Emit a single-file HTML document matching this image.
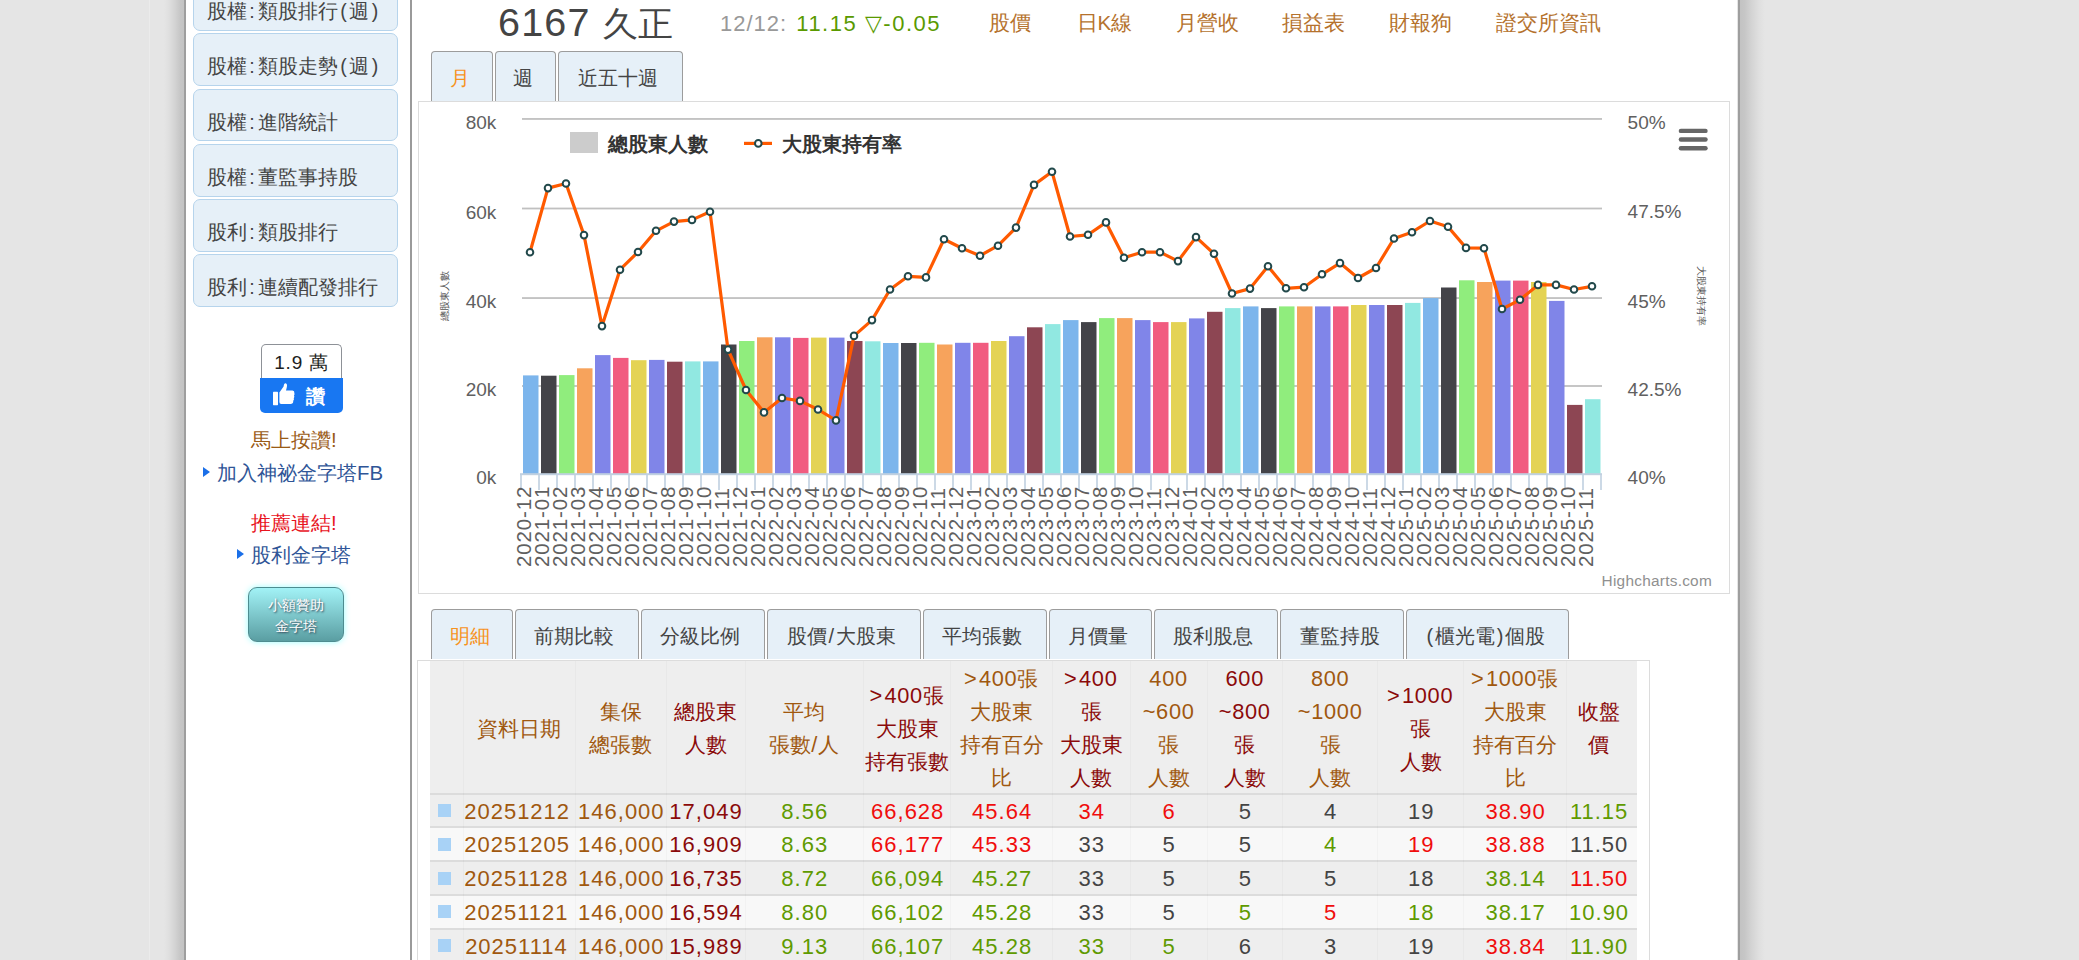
<!DOCTYPE html>
<html><head><meta charset="utf-8">
<style>
*{box-sizing:border-box;margin:0;padding:0}
html,body{width:2079px;height:960px;overflow:hidden}
body{position:relative;background:#e5e5e5;font-family:"Liberation Sans",sans-serif;color:#444}
.abs{position:absolute}
#vl{position:absolute;left:149px;top:0;width:1px;height:960px;background:#ebebeb}
#wrap{position:absolute;left:185.8px;top:0;width:1551.7px;height:960px;background:#fff}
#shl{position:absolute;left:164px;top:0;width:20px;height:960px;background:linear-gradient(to left,#c3c3c3 0%,#c6c6c6 18%,#d3d3d3 45%,#dfdfdf 75%,#e5e5e5 100%)}
#lnl{position:absolute;left:183.9px;top:0;width:1.9px;height:960px;background:#9e9e9e}
#shr{position:absolute;left:1739.7px;top:0;width:25px;height:960px;background:linear-gradient(to right,#c3c3c3 0%,#c6c6c6 18%,#d3d3d3 45%,#dfdfdf 75%,#e5e5e5 100%)}
#lnr{position:absolute;left:1737.8px;top:0;width:1.9px;height:960px;background:#9e9e9e}
.sb{position:absolute;left:193px;width:205px;height:52.9px;background:#e6f0f8;border:1.4px solid #b6d4ec;border-radius:7px;font-size:19.6px;color:#444;padding-left:12.5px;line-height:20px;padding-top:22px;white-space:nowrap}
.col{margin:0 2.8px}
.tpar{margin:0 1.8px}
.par{margin:0 2.6px}
#sline{position:absolute;left:410px;top:0;width:2px;height:960px;background:#9a9a9a}
#fb{position:absolute;left:260.6px;top:343.8px;width:82px;height:69px}
#fbt{position:absolute;left:0.5px;top:0;width:81px;height:35px;background:#fff;border:1.5px solid #8d9197;border-bottom:none;border-radius:5px 5px 0 0;font-size:19px;color:#1c1e21;text-align:center;line-height:36px;letter-spacing:0.8px}
#fbb{position:absolute;left:-0.4px;top:34.1px;width:83px;height:35px;background:#1877f2;color:#fff;font-size:19px;font-weight:bold;line-height:38px;padding-left:45.5px;border-radius:0 0 5px 5px}
.st{position:absolute;font-size:20.4px;white-space:nowrap;line-height:24px}
.tri{position:absolute;width:0;height:0;border-top:5px solid transparent;border-bottom:5px solid transparent;border-left:7px solid #1a6fe8}
#don{position:absolute;left:247.5px;top:587px;width:96px;height:55px;border-radius:9px;border:1.5px solid #4e8c90;background:linear-gradient(#a2f2f6,#5a9ea2);box-shadow:0 0 6px #9ff;color:#fff;font-size:14px;text-align:center;line-height:20.5px;padding-top:7px;text-shadow:1px 1px 2px #345}
#title{position:absolute;left:498px;top:-2px;font-size:39.5px;color:#444;white-space:nowrap;line-height:48px}
#dt{position:absolute;left:720px;top:10.5px;font-size:22px;color:#999;white-space:nowrap;line-height:26px;letter-spacing:1px}
#dt span{color:#5a9a00;letter-spacing:1.5px;margin-left:2px}
.lk{position:absolute;top:10px;font-size:20.5px;color:#b5722d;white-space:nowrap;line-height:26px}
.tab{position:absolute;background:#e6f0f8;border:1.5px solid #9c9c9c;border-bottom:none;border-radius:4px 4px 0 0;font-size:20px;color:#444;text-align:center;line-height:20px;padding-top:16px;padding-right:5px;white-space:nowrap}
.tab.act{color:#f7931e}
#chart{position:absolute;left:417.5px;top:101px;width:1312px;height:493px;border:1px solid #dcdcdc;background:#fff}
#tbl{position:absolute;left:417px;top:659.6px;width:1232.6px;height:400px;border:1px solid #dcdcdc;background:#fff}
.xl{font-family:"Liberation Sans",sans-serif;font-size:20.5px;fill:#606060;letter-spacing:0.85px}
.yl{font-family:"Liberation Sans",sans-serif;font-size:19px;fill:#606060}
.at{font-family:"Liberation Sans",sans-serif;font-size:10px;fill:#555}
.lg{font-family:"Liberation Sans",sans-serif;font-size:20px;font-weight:bold;fill:#333}
.hc{font-family:"Liberation Sans",sans-serif;font-size:15.4px;letter-spacing:0.25px;fill:#909090}
.thbg{position:absolute;background:#eeeeee}
.csep{position:absolute;width:1px;background:rgba(0,0,0,0.025)}
.th{position:absolute;display:flex;align-items:center;justify-content:center;text-align:center;font-size:20.5px;line-height:33px;white-space:nowrap;padding-top:2.5px}
.hn{font-size:21.8px;letter-spacing:0.7px}
.gt{margin-right:1.5px;margin-left:-1px}
.tr{position:absolute;left:430px;width:1206.5px;height:33.8px;border-top:2px solid #dcdcdc}
.ic{position:absolute;left:438.3px;width:13px;height:13px;background:#a8d2f6}
.td{position:absolute;height:33.8px;text-align:center;font-size:22px;line-height:37px;letter-spacing:1px;text-indent:1px;white-space:nowrap}
</style></head>
<body>
<div id="vl"></div>
<div id="wrap"></div><div id="shl"></div><div id="lnl"></div><div id="shr"></div><div id="lnr"></div>
<div class="sb" style="top:-21.8px">股權<span class="col">:</span>類股排行<span class="par">(</span>週<span class="par">)</span></div>
<div class="sb" style="top:33.4px">股權<span class="col">:</span>類股走勢<span class="par">(</span>週<span class="par">)</span></div>
<div class="sb" style="top:88.6px">股權<span class="col">:</span>進階統計</div>
<div class="sb" style="top:143.8px">股權<span class="col">:</span>董監事持股</div>
<div class="sb" style="top:199.0px">股利<span class="col">:</span>類股排行</div>
<div class="sb" style="top:254.2px">股利<span class="col">:</span>連續配發排行</div>
<div id="sline"></div>
<div id="fb"><div id="fbt">1.9 萬</div><div id="fbb">讚</div>
<svg style="position:absolute;left:12.6px;top:39.4px" width="22" height="23" viewBox="0 0 22 23"><rect x="0" y="8.8" width="5" height="13.4" rx="0.6" fill="#fff"/><path d="M6.4 9.5 L10.6 3.6 Q11 0.2 12.6 0.3 Q14.6 0.8 13.8 4.2 L13 7.6 L19.5 7.6 Q21.6 8 21.4 10.2 Q21.8 11.6 21 12.6 Q21.8 14 20.8 15.2 Q21.4 16.8 20.2 17.8 Q20.6 20.8 18 20.9 L8.2 20.9 Q6.4 20.9 6.4 19 Z" fill="#fff"/></svg>
</div>
<div class="st" style="left:251px;top:427.5px;color:#9a5b16">馬上按讚!</div>
<div class="tri" style="left:203px;top:467px"></div>
<div class="st" style="left:217px;top:460.5px;color:#2f5597">加入神祕金字塔FB</div>
<div class="st" style="left:251px;top:510.5px;color:#e8141e">推薦連結!</div>
<div class="tri" style="left:237px;top:549px"></div>
<div class="st" style="left:250.5px;top:543px;color:#2f5597">股利金字塔</div>
<div id="don">小額贊助<br>金字塔</div>
<div id="title"><span style="letter-spacing:1.2px">6167</span> <span style="font-size:35px;margin-left:1.5px">久正</span></div>
<div id="dt">12/12: <span>11.15 ▽-0.05</span></div>
<div class="lk" style="left:988.8px">股價</div>
<div class="lk" style="left:1076.5px">日K線</div>
<div class="lk" style="left:1176.0px">月營收</div>
<div class="lk" style="left:1282.3px">損益表</div>
<div class="lk" style="left:1388.8px">財報狗</div>
<div class="lk" style="left:1495.8px">證交所資訊</div>
<div class="tab act" style="left:431.1px;top:51px;width:61.9px;height:50px">月</div>
<div class="tab" style="left:494.6px;top:51px;width:61.3px;height:50px">週</div>
<div class="tab" style="left:557.8px;top:51px;width:124.8px;height:50px">近五十週</div>
<div id="chart"></div>
<div class="tab act" style="left:431.0px;top:608.8px;width:82.1px;height:50.2px">明細</div>
<div class="tab" style="left:514.7px;top:608.8px;width:124.5px;height:50.2px">前期比較</div>
<div class="tab" style="left:640.9px;top:608.8px;width:124.1px;height:50.2px">分級比例</div>
<div class="tab" style="left:766.7px;top:608.8px;width:154.1px;height:50.2px">股價<span class="tpar">/</span>大股東</div>
<div class="tab" style="left:922.5px;top:608.8px;width:124.4px;height:50.2px">平均張數</div>
<div class="tab" style="left:1048.6px;top:608.8px;width:103.7px;height:50.2px">月價量</div>
<div class="tab" style="left:1154.0px;top:608.8px;width:123.7px;height:50.2px">股利股息</div>
<div class="tab" style="left:1279.7px;top:608.8px;width:124.7px;height:50.2px">董監持股</div>
<div class="tab" style="left:1406.1px;top:608.8px;width:162.8px;height:50.2px"><span class="tpar">(</span>櫃光電<span class="tpar">)</span>個股</div>
<div id="tbl"></div>
<svg width="2079" height="960" style="position:absolute;left:0;top:0">
<rect x="522" y="118.05" width="1080" height="1.8" fill="#c0c0c0"/>
<rect x="522" y="207.60" width="1080" height="1.8" fill="#c0c0c0"/>
<rect x="522" y="297.15" width="1080" height="1.8" fill="#c0c0c0"/>
<rect x="522" y="385.10" width="1080" height="1.8" fill="#c0c0c0"/>
<rect x="523.00" y="375.40" width="15.5" height="98.60" fill="#7cb5ec"/>
<rect x="541.00" y="375.70" width="15.5" height="98.30" fill="#434348"/>
<rect x="559.00" y="375.10" width="15.5" height="98.90" fill="#90ed7d"/>
<rect x="577.00" y="368.30" width="15.5" height="105.70" fill="#f7a35c"/>
<rect x="595.00" y="355.10" width="15.5" height="118.90" fill="#8085e9"/>
<rect x="613.00" y="357.90" width="15.5" height="116.10" fill="#f15c80"/>
<rect x="631.00" y="360.20" width="15.5" height="113.80" fill="#e4d354"/>
<rect x="649.00" y="359.90" width="15.5" height="114.10" fill="#8085e8"/>
<rect x="667.00" y="361.70" width="15.5" height="112.30" fill="#8d4653"/>
<rect x="685.00" y="361.40" width="15.5" height="112.60" fill="#91e8e1"/>
<rect x="703.00" y="361.40" width="15.5" height="112.60" fill="#7cb5ec"/>
<rect x="721.00" y="344.50" width="15.5" height="129.50" fill="#434348"/>
<rect x="739.00" y="341.00" width="15.5" height="133.00" fill="#90ed7d"/>
<rect x="757.00" y="337.30" width="15.5" height="136.70" fill="#f7a35c"/>
<rect x="775.00" y="337.30" width="15.5" height="136.70" fill="#8085e9"/>
<rect x="793.00" y="337.90" width="15.5" height="136.10" fill="#f15c80"/>
<rect x="811.00" y="337.60" width="15.5" height="136.40" fill="#e4d354"/>
<rect x="829.00" y="337.60" width="15.5" height="136.40" fill="#8085e8"/>
<rect x="847.00" y="341.00" width="15.5" height="133.00" fill="#8d4653"/>
<rect x="865.00" y="341.30" width="15.5" height="132.70" fill="#91e8e1"/>
<rect x="883.00" y="343.00" width="15.5" height="131.00" fill="#7cb5ec"/>
<rect x="901.00" y="343.00" width="15.5" height="131.00" fill="#434348"/>
<rect x="919.00" y="342.80" width="15.5" height="131.20" fill="#90ed7d"/>
<rect x="937.00" y="344.50" width="15.5" height="129.50" fill="#f7a35c"/>
<rect x="955.00" y="342.80" width="15.5" height="131.20" fill="#8085e9"/>
<rect x="973.00" y="342.80" width="15.5" height="131.20" fill="#f15c80"/>
<rect x="991.00" y="341.00" width="15.5" height="133.00" fill="#e4d354"/>
<rect x="1009.00" y="336.20" width="15.5" height="137.80" fill="#8085e8"/>
<rect x="1027.00" y="327.30" width="15.5" height="146.70" fill="#8d4653"/>
<rect x="1045.00" y="324.10" width="15.5" height="149.90" fill="#91e8e1"/>
<rect x="1063.00" y="320.10" width="15.5" height="153.90" fill="#7cb5ec"/>
<rect x="1081.00" y="322.10" width="15.5" height="151.90" fill="#434348"/>
<rect x="1099.00" y="318.10" width="15.5" height="155.90" fill="#90ed7d"/>
<rect x="1117.00" y="318.10" width="15.5" height="155.90" fill="#f7a35c"/>
<rect x="1135.00" y="320.10" width="15.5" height="153.90" fill="#8085e9"/>
<rect x="1153.00" y="322.10" width="15.5" height="151.90" fill="#f15c80"/>
<rect x="1171.00" y="322.10" width="15.5" height="151.90" fill="#e4d354"/>
<rect x="1189.00" y="318.40" width="15.5" height="155.60" fill="#8085e8"/>
<rect x="1207.00" y="311.80" width="15.5" height="162.20" fill="#8d4653"/>
<rect x="1225.00" y="308.10" width="15.5" height="165.90" fill="#91e8e1"/>
<rect x="1243.00" y="306.40" width="15.5" height="167.60" fill="#7cb5ec"/>
<rect x="1261.00" y="308.10" width="15.5" height="165.90" fill="#434348"/>
<rect x="1279.00" y="306.40" width="15.5" height="167.60" fill="#90ed7d"/>
<rect x="1297.00" y="306.40" width="15.5" height="167.60" fill="#f7a35c"/>
<rect x="1315.00" y="306.40" width="15.5" height="167.60" fill="#8085e9"/>
<rect x="1333.00" y="306.40" width="15.5" height="167.60" fill="#f15c80"/>
<rect x="1351.00" y="305.00" width="15.5" height="169.00" fill="#e4d354"/>
<rect x="1369.00" y="305.00" width="15.5" height="169.00" fill="#8085e8"/>
<rect x="1387.00" y="305.00" width="15.5" height="169.00" fill="#8d4653"/>
<rect x="1405.00" y="302.90" width="15.5" height="171.10" fill="#91e8e1"/>
<rect x="1423.00" y="298.10" width="15.5" height="175.90" fill="#7cb5ec"/>
<rect x="1441.00" y="287.50" width="15.5" height="186.50" fill="#434348"/>
<rect x="1459.00" y="280.30" width="15.5" height="193.70" fill="#90ed7d"/>
<rect x="1477.00" y="282.00" width="15.5" height="192.00" fill="#f7a35c"/>
<rect x="1495.00" y="280.60" width="15.5" height="193.40" fill="#8085e9"/>
<rect x="1513.00" y="280.60" width="15.5" height="193.40" fill="#f15c80"/>
<rect x="1531.00" y="282.00" width="15.5" height="192.00" fill="#e4d354"/>
<rect x="1549.00" y="300.90" width="15.5" height="173.10" fill="#8085e8"/>
<rect x="1567.00" y="404.90" width="15.5" height="69.10" fill="#8d4653"/>
<rect x="1585.00" y="399.20" width="15.5" height="74.80" fill="#91e8e1"/>
<rect x="520" y="473.2" width="1082" height="2" fill="#c0d0e0"/>
<rect x="520.20" y="474" width="1.6" height="16" fill="#c0d0e0"/>
<rect x="538.20" y="474" width="1.6" height="16" fill="#c0d0e0"/>
<rect x="556.20" y="474" width="1.6" height="16" fill="#c0d0e0"/>
<rect x="574.20" y="474" width="1.6" height="16" fill="#c0d0e0"/>
<rect x="592.20" y="474" width="1.6" height="16" fill="#c0d0e0"/>
<rect x="610.20" y="474" width="1.6" height="16" fill="#c0d0e0"/>
<rect x="628.20" y="474" width="1.6" height="16" fill="#c0d0e0"/>
<rect x="646.20" y="474" width="1.6" height="16" fill="#c0d0e0"/>
<rect x="664.20" y="474" width="1.6" height="16" fill="#c0d0e0"/>
<rect x="682.20" y="474" width="1.6" height="16" fill="#c0d0e0"/>
<rect x="700.20" y="474" width="1.6" height="16" fill="#c0d0e0"/>
<rect x="718.20" y="474" width="1.6" height="16" fill="#c0d0e0"/>
<rect x="736.20" y="474" width="1.6" height="16" fill="#c0d0e0"/>
<rect x="754.20" y="474" width="1.6" height="16" fill="#c0d0e0"/>
<rect x="772.20" y="474" width="1.6" height="16" fill="#c0d0e0"/>
<rect x="790.20" y="474" width="1.6" height="16" fill="#c0d0e0"/>
<rect x="808.20" y="474" width="1.6" height="16" fill="#c0d0e0"/>
<rect x="826.20" y="474" width="1.6" height="16" fill="#c0d0e0"/>
<rect x="844.20" y="474" width="1.6" height="16" fill="#c0d0e0"/>
<rect x="862.20" y="474" width="1.6" height="16" fill="#c0d0e0"/>
<rect x="880.20" y="474" width="1.6" height="16" fill="#c0d0e0"/>
<rect x="898.20" y="474" width="1.6" height="16" fill="#c0d0e0"/>
<rect x="916.20" y="474" width="1.6" height="16" fill="#c0d0e0"/>
<rect x="934.20" y="474" width="1.6" height="16" fill="#c0d0e0"/>
<rect x="952.20" y="474" width="1.6" height="16" fill="#c0d0e0"/>
<rect x="970.20" y="474" width="1.6" height="16" fill="#c0d0e0"/>
<rect x="988.20" y="474" width="1.6" height="16" fill="#c0d0e0"/>
<rect x="1006.20" y="474" width="1.6" height="16" fill="#c0d0e0"/>
<rect x="1024.20" y="474" width="1.6" height="16" fill="#c0d0e0"/>
<rect x="1042.20" y="474" width="1.6" height="16" fill="#c0d0e0"/>
<rect x="1060.20" y="474" width="1.6" height="16" fill="#c0d0e0"/>
<rect x="1078.20" y="474" width="1.6" height="16" fill="#c0d0e0"/>
<rect x="1096.20" y="474" width="1.6" height="16" fill="#c0d0e0"/>
<rect x="1114.20" y="474" width="1.6" height="16" fill="#c0d0e0"/>
<rect x="1132.20" y="474" width="1.6" height="16" fill="#c0d0e0"/>
<rect x="1150.20" y="474" width="1.6" height="16" fill="#c0d0e0"/>
<rect x="1168.20" y="474" width="1.6" height="16" fill="#c0d0e0"/>
<rect x="1186.20" y="474" width="1.6" height="16" fill="#c0d0e0"/>
<rect x="1204.20" y="474" width="1.6" height="16" fill="#c0d0e0"/>
<rect x="1222.20" y="474" width="1.6" height="16" fill="#c0d0e0"/>
<rect x="1240.20" y="474" width="1.6" height="16" fill="#c0d0e0"/>
<rect x="1258.20" y="474" width="1.6" height="16" fill="#c0d0e0"/>
<rect x="1276.20" y="474" width="1.6" height="16" fill="#c0d0e0"/>
<rect x="1294.20" y="474" width="1.6" height="16" fill="#c0d0e0"/>
<rect x="1312.20" y="474" width="1.6" height="16" fill="#c0d0e0"/>
<rect x="1330.20" y="474" width="1.6" height="16" fill="#c0d0e0"/>
<rect x="1348.20" y="474" width="1.6" height="16" fill="#c0d0e0"/>
<rect x="1366.20" y="474" width="1.6" height="16" fill="#c0d0e0"/>
<rect x="1384.20" y="474" width="1.6" height="16" fill="#c0d0e0"/>
<rect x="1402.20" y="474" width="1.6" height="16" fill="#c0d0e0"/>
<rect x="1420.20" y="474" width="1.6" height="16" fill="#c0d0e0"/>
<rect x="1438.20" y="474" width="1.6" height="16" fill="#c0d0e0"/>
<rect x="1456.20" y="474" width="1.6" height="16" fill="#c0d0e0"/>
<rect x="1474.20" y="474" width="1.6" height="16" fill="#c0d0e0"/>
<rect x="1492.20" y="474" width="1.6" height="16" fill="#c0d0e0"/>
<rect x="1510.20" y="474" width="1.6" height="16" fill="#c0d0e0"/>
<rect x="1528.20" y="474" width="1.6" height="16" fill="#c0d0e0"/>
<rect x="1546.20" y="474" width="1.6" height="16" fill="#c0d0e0"/>
<rect x="1564.20" y="474" width="1.6" height="16" fill="#c0d0e0"/>
<rect x="1582.20" y="474" width="1.6" height="16" fill="#c0d0e0"/>
<rect x="1600.20" y="474" width="1.6" height="16" fill="#c0d0e0"/>
<path d="M530.00 252.20 L548.00 188.10 L566.00 183.50 L584.00 235.10 L602.00 326.10 L620.00 269.70 L638.00 252.00 L656.00 230.80 L674.00 221.60 L692.00 219.90 L710.00 211.80 L728.00 349.60 L746.00 390.00 L764.00 412.40 L782.00 398.00 L800.00 400.90 L818.00 409.50 L836.00 420.40 L854.00 335.90 L872.00 320.10 L890.00 289.50 L908.00 276.30 L926.00 277.40 L944.00 239.30 L962.00 248.20 L980.00 255.70 L998.00 245.70 L1016.00 227.60 L1034.00 184.90 L1052.00 171.70 L1070.00 236.50 L1088.00 234.80 L1106.00 222.40 L1124.00 257.70 L1142.00 252.20 L1160.00 252.20 L1178.00 261.10 L1196.00 237.10 L1214.00 253.70 L1232.00 293.50 L1250.00 288.60 L1268.00 266.30 L1286.00 288.30 L1304.00 287.20 L1322.00 274.30 L1340.00 263.10 L1358.00 278.00 L1376.00 268.00 L1394.00 238.50 L1412.00 232.20 L1430.00 221.00 L1448.00 226.70 L1466.00 247.90 L1484.00 248.20 L1502.00 309.00 L1520.00 299.80 L1538.00 284.90 L1556.00 284.90 L1574.00 289.50 L1592.00 286.30" fill="none" stroke="#ff5a00" stroke-width="3.2" stroke-linejoin="round"/>
<circle cx="530.00" cy="252.20" r="3.3" fill="#fff" stroke="#22494b" stroke-width="2.0"/>
<circle cx="548.00" cy="188.10" r="3.3" fill="#fff" stroke="#22494b" stroke-width="2.0"/>
<circle cx="566.00" cy="183.50" r="3.3" fill="#fff" stroke="#22494b" stroke-width="2.0"/>
<circle cx="584.00" cy="235.10" r="3.3" fill="#fff" stroke="#22494b" stroke-width="2.0"/>
<circle cx="602.00" cy="326.10" r="3.3" fill="#fff" stroke="#22494b" stroke-width="2.0"/>
<circle cx="620.00" cy="269.70" r="3.3" fill="#fff" stroke="#22494b" stroke-width="2.0"/>
<circle cx="638.00" cy="252.00" r="3.3" fill="#fff" stroke="#22494b" stroke-width="2.0"/>
<circle cx="656.00" cy="230.80" r="3.3" fill="#fff" stroke="#22494b" stroke-width="2.0"/>
<circle cx="674.00" cy="221.60" r="3.3" fill="#fff" stroke="#22494b" stroke-width="2.0"/>
<circle cx="692.00" cy="219.90" r="3.3" fill="#fff" stroke="#22494b" stroke-width="2.0"/>
<circle cx="710.00" cy="211.80" r="3.3" fill="#fff" stroke="#22494b" stroke-width="2.0"/>
<circle cx="728.00" cy="349.60" r="3.3" fill="#fff" stroke="#22494b" stroke-width="2.0"/>
<circle cx="746.00" cy="390.00" r="3.3" fill="#fff" stroke="#22494b" stroke-width="2.0"/>
<circle cx="764.00" cy="412.40" r="3.3" fill="#fff" stroke="#22494b" stroke-width="2.0"/>
<circle cx="782.00" cy="398.00" r="3.3" fill="#fff" stroke="#22494b" stroke-width="2.0"/>
<circle cx="800.00" cy="400.90" r="3.3" fill="#fff" stroke="#22494b" stroke-width="2.0"/>
<circle cx="818.00" cy="409.50" r="3.3" fill="#fff" stroke="#22494b" stroke-width="2.0"/>
<circle cx="836.00" cy="420.40" r="3.3" fill="#fff" stroke="#22494b" stroke-width="2.0"/>
<circle cx="854.00" cy="335.90" r="3.3" fill="#fff" stroke="#22494b" stroke-width="2.0"/>
<circle cx="872.00" cy="320.10" r="3.3" fill="#fff" stroke="#22494b" stroke-width="2.0"/>
<circle cx="890.00" cy="289.50" r="3.3" fill="#fff" stroke="#22494b" stroke-width="2.0"/>
<circle cx="908.00" cy="276.30" r="3.3" fill="#fff" stroke="#22494b" stroke-width="2.0"/>
<circle cx="926.00" cy="277.40" r="3.3" fill="#fff" stroke="#22494b" stroke-width="2.0"/>
<circle cx="944.00" cy="239.30" r="3.3" fill="#fff" stroke="#22494b" stroke-width="2.0"/>
<circle cx="962.00" cy="248.20" r="3.3" fill="#fff" stroke="#22494b" stroke-width="2.0"/>
<circle cx="980.00" cy="255.70" r="3.3" fill="#fff" stroke="#22494b" stroke-width="2.0"/>
<circle cx="998.00" cy="245.70" r="3.3" fill="#fff" stroke="#22494b" stroke-width="2.0"/>
<circle cx="1016.00" cy="227.60" r="3.3" fill="#fff" stroke="#22494b" stroke-width="2.0"/>
<circle cx="1034.00" cy="184.90" r="3.3" fill="#fff" stroke="#22494b" stroke-width="2.0"/>
<circle cx="1052.00" cy="171.70" r="3.3" fill="#fff" stroke="#22494b" stroke-width="2.0"/>
<circle cx="1070.00" cy="236.50" r="3.3" fill="#fff" stroke="#22494b" stroke-width="2.0"/>
<circle cx="1088.00" cy="234.80" r="3.3" fill="#fff" stroke="#22494b" stroke-width="2.0"/>
<circle cx="1106.00" cy="222.40" r="3.3" fill="#fff" stroke="#22494b" stroke-width="2.0"/>
<circle cx="1124.00" cy="257.70" r="3.3" fill="#fff" stroke="#22494b" stroke-width="2.0"/>
<circle cx="1142.00" cy="252.20" r="3.3" fill="#fff" stroke="#22494b" stroke-width="2.0"/>
<circle cx="1160.00" cy="252.20" r="3.3" fill="#fff" stroke="#22494b" stroke-width="2.0"/>
<circle cx="1178.00" cy="261.10" r="3.3" fill="#fff" stroke="#22494b" stroke-width="2.0"/>
<circle cx="1196.00" cy="237.10" r="3.3" fill="#fff" stroke="#22494b" stroke-width="2.0"/>
<circle cx="1214.00" cy="253.70" r="3.3" fill="#fff" stroke="#22494b" stroke-width="2.0"/>
<circle cx="1232.00" cy="293.50" r="3.3" fill="#fff" stroke="#22494b" stroke-width="2.0"/>
<circle cx="1250.00" cy="288.60" r="3.3" fill="#fff" stroke="#22494b" stroke-width="2.0"/>
<circle cx="1268.00" cy="266.30" r="3.3" fill="#fff" stroke="#22494b" stroke-width="2.0"/>
<circle cx="1286.00" cy="288.30" r="3.3" fill="#fff" stroke="#22494b" stroke-width="2.0"/>
<circle cx="1304.00" cy="287.20" r="3.3" fill="#fff" stroke="#22494b" stroke-width="2.0"/>
<circle cx="1322.00" cy="274.30" r="3.3" fill="#fff" stroke="#22494b" stroke-width="2.0"/>
<circle cx="1340.00" cy="263.10" r="3.3" fill="#fff" stroke="#22494b" stroke-width="2.0"/>
<circle cx="1358.00" cy="278.00" r="3.3" fill="#fff" stroke="#22494b" stroke-width="2.0"/>
<circle cx="1376.00" cy="268.00" r="3.3" fill="#fff" stroke="#22494b" stroke-width="2.0"/>
<circle cx="1394.00" cy="238.50" r="3.3" fill="#fff" stroke="#22494b" stroke-width="2.0"/>
<circle cx="1412.00" cy="232.20" r="3.3" fill="#fff" stroke="#22494b" stroke-width="2.0"/>
<circle cx="1430.00" cy="221.00" r="3.3" fill="#fff" stroke="#22494b" stroke-width="2.0"/>
<circle cx="1448.00" cy="226.70" r="3.3" fill="#fff" stroke="#22494b" stroke-width="2.0"/>
<circle cx="1466.00" cy="247.90" r="3.3" fill="#fff" stroke="#22494b" stroke-width="2.0"/>
<circle cx="1484.00" cy="248.20" r="3.3" fill="#fff" stroke="#22494b" stroke-width="2.0"/>
<circle cx="1502.00" cy="309.00" r="3.3" fill="#fff" stroke="#22494b" stroke-width="2.0"/>
<circle cx="1520.00" cy="299.80" r="3.3" fill="#fff" stroke="#22494b" stroke-width="2.0"/>
<circle cx="1538.00" cy="284.90" r="3.3" fill="#fff" stroke="#22494b" stroke-width="2.0"/>
<circle cx="1556.00" cy="284.90" r="3.3" fill="#fff" stroke="#22494b" stroke-width="2.0"/>
<circle cx="1574.00" cy="289.50" r="3.3" fill="#fff" stroke="#22494b" stroke-width="2.0"/>
<circle cx="1592.00" cy="286.30" r="3.3" fill="#fff" stroke="#22494b" stroke-width="2.0"/>
<text transform="translate(524.00 567) rotate(-90)" x="0" y="0" dy="7" class="xl">2020-12</text>
<text transform="translate(542.00 567) rotate(-90)" x="0" y="0" dy="7" class="xl">2021-01</text>
<text transform="translate(560.00 567) rotate(-90)" x="0" y="0" dy="7" class="xl">2021-02</text>
<text transform="translate(578.00 567) rotate(-90)" x="0" y="0" dy="7" class="xl">2021-03</text>
<text transform="translate(596.00 567) rotate(-90)" x="0" y="0" dy="7" class="xl">2021-04</text>
<text transform="translate(614.00 567) rotate(-90)" x="0" y="0" dy="7" class="xl">2021-05</text>
<text transform="translate(632.00 567) rotate(-90)" x="0" y="0" dy="7" class="xl">2021-06</text>
<text transform="translate(650.00 567) rotate(-90)" x="0" y="0" dy="7" class="xl">2021-07</text>
<text transform="translate(668.00 567) rotate(-90)" x="0" y="0" dy="7" class="xl">2021-08</text>
<text transform="translate(686.00 567) rotate(-90)" x="0" y="0" dy="7" class="xl">2021-09</text>
<text transform="translate(704.00 567) rotate(-90)" x="0" y="0" dy="7" class="xl">2021-10</text>
<text transform="translate(722.00 567) rotate(-90)" x="0" y="0" dy="7" class="xl">2021-11</text>
<text transform="translate(740.00 567) rotate(-90)" x="0" y="0" dy="7" class="xl">2021-12</text>
<text transform="translate(758.00 567) rotate(-90)" x="0" y="0" dy="7" class="xl">2022-01</text>
<text transform="translate(776.00 567) rotate(-90)" x="0" y="0" dy="7" class="xl">2022-02</text>
<text transform="translate(794.00 567) rotate(-90)" x="0" y="0" dy="7" class="xl">2022-03</text>
<text transform="translate(812.00 567) rotate(-90)" x="0" y="0" dy="7" class="xl">2022-04</text>
<text transform="translate(830.00 567) rotate(-90)" x="0" y="0" dy="7" class="xl">2022-05</text>
<text transform="translate(848.00 567) rotate(-90)" x="0" y="0" dy="7" class="xl">2022-06</text>
<text transform="translate(866.00 567) rotate(-90)" x="0" y="0" dy="7" class="xl">2022-07</text>
<text transform="translate(884.00 567) rotate(-90)" x="0" y="0" dy="7" class="xl">2022-08</text>
<text transform="translate(902.00 567) rotate(-90)" x="0" y="0" dy="7" class="xl">2022-09</text>
<text transform="translate(920.00 567) rotate(-90)" x="0" y="0" dy="7" class="xl">2022-10</text>
<text transform="translate(938.00 567) rotate(-90)" x="0" y="0" dy="7" class="xl">2022-11</text>
<text transform="translate(956.00 567) rotate(-90)" x="0" y="0" dy="7" class="xl">2022-12</text>
<text transform="translate(974.00 567) rotate(-90)" x="0" y="0" dy="7" class="xl">2023-01</text>
<text transform="translate(992.00 567) rotate(-90)" x="0" y="0" dy="7" class="xl">2023-02</text>
<text transform="translate(1010.00 567) rotate(-90)" x="0" y="0" dy="7" class="xl">2023-03</text>
<text transform="translate(1028.00 567) rotate(-90)" x="0" y="0" dy="7" class="xl">2023-04</text>
<text transform="translate(1046.00 567) rotate(-90)" x="0" y="0" dy="7" class="xl">2023-05</text>
<text transform="translate(1064.00 567) rotate(-90)" x="0" y="0" dy="7" class="xl">2023-06</text>
<text transform="translate(1082.00 567) rotate(-90)" x="0" y="0" dy="7" class="xl">2023-07</text>
<text transform="translate(1100.00 567) rotate(-90)" x="0" y="0" dy="7" class="xl">2023-08</text>
<text transform="translate(1118.00 567) rotate(-90)" x="0" y="0" dy="7" class="xl">2023-09</text>
<text transform="translate(1136.00 567) rotate(-90)" x="0" y="0" dy="7" class="xl">2023-10</text>
<text transform="translate(1154.00 567) rotate(-90)" x="0" y="0" dy="7" class="xl">2023-11</text>
<text transform="translate(1172.00 567) rotate(-90)" x="0" y="0" dy="7" class="xl">2023-12</text>
<text transform="translate(1190.00 567) rotate(-90)" x="0" y="0" dy="7" class="xl">2024-01</text>
<text transform="translate(1208.00 567) rotate(-90)" x="0" y="0" dy="7" class="xl">2024-02</text>
<text transform="translate(1226.00 567) rotate(-90)" x="0" y="0" dy="7" class="xl">2024-03</text>
<text transform="translate(1244.00 567) rotate(-90)" x="0" y="0" dy="7" class="xl">2024-04</text>
<text transform="translate(1262.00 567) rotate(-90)" x="0" y="0" dy="7" class="xl">2024-05</text>
<text transform="translate(1280.00 567) rotate(-90)" x="0" y="0" dy="7" class="xl">2024-06</text>
<text transform="translate(1298.00 567) rotate(-90)" x="0" y="0" dy="7" class="xl">2024-07</text>
<text transform="translate(1316.00 567) rotate(-90)" x="0" y="0" dy="7" class="xl">2024-08</text>
<text transform="translate(1334.00 567) rotate(-90)" x="0" y="0" dy="7" class="xl">2024-09</text>
<text transform="translate(1352.00 567) rotate(-90)" x="0" y="0" dy="7" class="xl">2024-10</text>
<text transform="translate(1370.00 567) rotate(-90)" x="0" y="0" dy="7" class="xl">2024-11</text>
<text transform="translate(1388.00 567) rotate(-90)" x="0" y="0" dy="7" class="xl">2024-12</text>
<text transform="translate(1406.00 567) rotate(-90)" x="0" y="0" dy="7" class="xl">2025-01</text>
<text transform="translate(1424.00 567) rotate(-90)" x="0" y="0" dy="7" class="xl">2025-02</text>
<text transform="translate(1442.00 567) rotate(-90)" x="0" y="0" dy="7" class="xl">2025-03</text>
<text transform="translate(1460.00 567) rotate(-90)" x="0" y="0" dy="7" class="xl">2025-04</text>
<text transform="translate(1478.00 567) rotate(-90)" x="0" y="0" dy="7" class="xl">2025-05</text>
<text transform="translate(1496.00 567) rotate(-90)" x="0" y="0" dy="7" class="xl">2025-06</text>
<text transform="translate(1514.00 567) rotate(-90)" x="0" y="0" dy="7" class="xl">2025-07</text>
<text transform="translate(1532.00 567) rotate(-90)" x="0" y="0" dy="7" class="xl">2025-08</text>
<text transform="translate(1550.00 567) rotate(-90)" x="0" y="0" dy="7" class="xl">2025-09</text>
<text transform="translate(1568.00 567) rotate(-90)" x="0" y="0" dy="7" class="xl">2025-10</text>
<text transform="translate(1586.00 567) rotate(-90)" x="0" y="0" dy="7" class="xl">2025-11</text>
<text x="496.3" y="128.95" text-anchor="end" class="yl">80k</text>
<text x="496.3" y="218.50" text-anchor="end" class="yl">60k</text>
<text x="496.3" y="308.05" text-anchor="end" class="yl">40k</text>
<text x="496.3" y="396.00" text-anchor="end" class="yl">20k</text>
<text x="496.3" y="484.00" text-anchor="end" class="yl">0k</text>
<text x="1627.6" y="128.85" class="yl">50%</text>
<text x="1627.6" y="218.40" class="yl">47.5%</text>
<text x="1627.6" y="307.95" class="yl">45%</text>
<text x="1627.6" y="395.90" class="yl">42.5%</text>
<text x="1627.6" y="483.90" class="yl">40%</text>
<text transform="translate(448 296) rotate(-90)" text-anchor="middle" class="at">總股東人數</text>
<text transform="translate(1698 296) rotate(90)" text-anchor="middle" class="at">大股東持有率</text>
<rect x="570" y="132" width="28" height="21" fill="#cccccc"/>
<text x="607.5" y="150.5" class="lg">總股東人數</text>
<rect x="744" y="141.8" width="28" height="3.2" fill="#ff5a00"/>
<circle cx="758.3" cy="143.4" r="3.3" fill="#fff" stroke="#22494b" stroke-width="2.0"/>
<text x="781.5" y="150.5" class="lg">大股東持有率</text>
<rect x="1678.7" y="128.7" width="29" height="4.4" rx="2.2" fill="#666"/>
<rect x="1678.7" y="137.3" width="29" height="4.4" rx="2.2" fill="#666"/>
<rect x="1678.7" y="146.0" width="29" height="4.4" rx="2.2" fill="#666"/>
<text x="1712" y="585.5" text-anchor="end" class="hc">Highcharts.com</text>
</svg>
<div class="thbg" style="left:430px;top:661.0px;width:1206.5px;height:131.5px"></div>
<div class="th" style="left:430.0px;width:33.2px;top:661.0px;height:131.5px;color:#a0580f;"><div></div></div>
<div class="th" style="left:463.2px;width:112.5px;top:661.0px;height:131.5px;color:#a0580f;"><div>資料日期</div></div>
<div class="th" style="left:575.7px;width:90.3px;top:661.0px;height:131.5px;color:#a0580f;"><div>集保<br>總張數</div></div>
<div class="th" style="left:666.0px;width:79.0px;top:661.0px;height:131.5px;color:#8b0a0a;"><div>總股東<br>人數</div></div>
<div class="th" style="left:745.0px;width:118.5px;top:661.0px;height:131.5px;color:#a0580f;"><div>平均<br>張數<span class="hn">/</span>人</div></div>
<div class="th" style="left:863.5px;width:87.4px;top:661.0px;height:131.5px;color:#8b0a0a;"><div><span class="hn"><span class="gt">&gt;</span>400</span>張<br>大股東<br>持有張數</div></div>
<div class="th" style="left:950.9px;width:101.5px;top:661.0px;height:131.5px;color:#a0580f;"><div><span class="hn"><span class="gt">&gt;</span>400</span>張<br>大股東<br>持有百分<br>比</div></div>
<div class="th" style="left:1052.4px;width:77.8px;top:661.0px;height:131.5px;color:#8b0a0a;"><div><span class="hn"><span class="gt">&gt;</span>400</span><br>張<br>大股東<br>人數</div></div>
<div class="th" style="left:1130.2px;width:76.8px;top:661.0px;height:131.5px;color:#a0580f;"><div><span class="hn">400</span><br><span class="hn">~600</span><br>張<br>人數</div></div>
<div class="th" style="left:1207.0px;width:75.5px;top:661.0px;height:131.5px;color:#8b0a0a;"><div><span class="hn">600</span><br><span class="hn">~800</span><br>張<br>人數</div></div>
<div class="th" style="left:1282.5px;width:95.3px;top:661.0px;height:131.5px;color:#a0580f;"><div><span class="hn">800</span><br><span class="hn">~1000</span><br>張<br>人數</div></div>
<div class="th" style="left:1377.8px;width:85.7px;top:661.0px;height:131.5px;color:#8b0a0a;"><div><span class="hn"><span class="gt">&gt;</span>1000</span><br>張<br>人數</div></div>
<div class="th" style="left:1463.5px;width:103.2px;top:661.0px;height:131.5px;color:#a0580f;"><div><span class="hn"><span class="gt">&gt;</span>1000</span>張<br>大股東<br>持有百分<br>比</div></div>
<div class="th" style="left:1566.7px;width:69.8px;top:661.0px;height:131.5px;color:#8b0a0a;padding-right:6px;"><div>收盤<br>價</div></div>
<div class="tr" style="top:792.5px;background:#eeeeee"></div>
<div class="tr" style="top:826.3px;background:#f8f8f8"></div>
<div class="tr" style="top:860.1px;background:#eeeeee"></div>
<div class="tr" style="top:893.9px;background:#f8f8f8"></div>
<div class="tr" style="top:927.7px;background:#eeeeee"></div>
<div class="csep" style="left:462.7px;top:661.0px;height:299.0px"></div>
<div class="csep" style="left:575.2px;top:661.0px;height:299.0px"></div>
<div class="csep" style="left:665.5px;top:661.0px;height:299.0px"></div>
<div class="csep" style="left:744.5px;top:661.0px;height:299.0px"></div>
<div class="csep" style="left:863.0px;top:661.0px;height:299.0px"></div>
<div class="csep" style="left:950.4px;top:661.0px;height:299.0px"></div>
<div class="csep" style="left:1051.9px;top:661.0px;height:299.0px"></div>
<div class="csep" style="left:1129.7px;top:661.0px;height:299.0px"></div>
<div class="csep" style="left:1206.5px;top:661.0px;height:299.0px"></div>
<div class="csep" style="left:1282.0px;top:661.0px;height:299.0px"></div>
<div class="csep" style="left:1377.3px;top:661.0px;height:299.0px"></div>
<div class="csep" style="left:1463.0px;top:661.0px;height:299.0px"></div>
<div class="csep" style="left:1566.2px;top:661.0px;height:299.0px"></div>
<div class="ic" style="top:803.9px"></div>
<div class="td" style="left:463.2px;width:112.5px;top:792.5px;color:#a0580f;padding-right:7px;">20251212</div>
<div class="td" style="left:575.7px;width:90.3px;top:792.5px;color:#a0580f;">146,000</div>
<div class="td" style="left:666.0px;width:79.0px;top:792.5px;color:#8b0a0a;">17,049</div>
<div class="td" style="left:745.0px;width:118.5px;top:792.5px;color:#5f9a00;">8.56</div>
<div class="td" style="left:863.5px;width:87.4px;top:792.5px;color:#f00d0d;">66,628</div>
<div class="td" style="left:950.9px;width:101.5px;top:792.5px;color:#f00d0d;">45.64</div>
<div class="td" style="left:1052.4px;width:77.8px;top:792.5px;color:#f00d0d;">34</div>
<div class="td" style="left:1130.2px;width:76.8px;top:792.5px;color:#f00d0d;">6</div>
<div class="td" style="left:1207.0px;width:75.5px;top:792.5px;color:#444444;">5</div>
<div class="td" style="left:1282.5px;width:95.3px;top:792.5px;color:#444444;">4</div>
<div class="td" style="left:1377.8px;width:85.7px;top:792.5px;color:#444444;">19</div>
<div class="td" style="left:1463.5px;width:103.2px;top:792.5px;color:#f00d0d;">38.90</div>
<div class="td" style="left:1566.7px;width:69.8px;top:792.5px;color:#5f9a00;padding-right:6px;">11.15</div>
<div class="ic" style="top:837.7px"></div>
<div class="td" style="left:463.2px;width:112.5px;top:826.3px;color:#a0580f;padding-right:7px;">20251205</div>
<div class="td" style="left:575.7px;width:90.3px;top:826.3px;color:#a0580f;">146,000</div>
<div class="td" style="left:666.0px;width:79.0px;top:826.3px;color:#8b0a0a;">16,909</div>
<div class="td" style="left:745.0px;width:118.5px;top:826.3px;color:#5f9a00;">8.63</div>
<div class="td" style="left:863.5px;width:87.4px;top:826.3px;color:#f00d0d;">66,177</div>
<div class="td" style="left:950.9px;width:101.5px;top:826.3px;color:#f00d0d;">45.33</div>
<div class="td" style="left:1052.4px;width:77.8px;top:826.3px;color:#444444;">33</div>
<div class="td" style="left:1130.2px;width:76.8px;top:826.3px;color:#444444;">5</div>
<div class="td" style="left:1207.0px;width:75.5px;top:826.3px;color:#444444;">5</div>
<div class="td" style="left:1282.5px;width:95.3px;top:826.3px;color:#5f9a00;">4</div>
<div class="td" style="left:1377.8px;width:85.7px;top:826.3px;color:#f00d0d;">19</div>
<div class="td" style="left:1463.5px;width:103.2px;top:826.3px;color:#f00d0d;">38.88</div>
<div class="td" style="left:1566.7px;width:69.8px;top:826.3px;color:#444444;padding-right:6px;">11.50</div>
<div class="ic" style="top:871.5px"></div>
<div class="td" style="left:463.2px;width:112.5px;top:860.1px;color:#a0580f;padding-right:7px;">20251128</div>
<div class="td" style="left:575.7px;width:90.3px;top:860.1px;color:#a0580f;">146,000</div>
<div class="td" style="left:666.0px;width:79.0px;top:860.1px;color:#8b0a0a;">16,735</div>
<div class="td" style="left:745.0px;width:118.5px;top:860.1px;color:#5f9a00;">8.72</div>
<div class="td" style="left:863.5px;width:87.4px;top:860.1px;color:#5f9a00;">66,094</div>
<div class="td" style="left:950.9px;width:101.5px;top:860.1px;color:#5f9a00;">45.27</div>
<div class="td" style="left:1052.4px;width:77.8px;top:860.1px;color:#444444;">33</div>
<div class="td" style="left:1130.2px;width:76.8px;top:860.1px;color:#444444;">5</div>
<div class="td" style="left:1207.0px;width:75.5px;top:860.1px;color:#444444;">5</div>
<div class="td" style="left:1282.5px;width:95.3px;top:860.1px;color:#444444;">5</div>
<div class="td" style="left:1377.8px;width:85.7px;top:860.1px;color:#444444;">18</div>
<div class="td" style="left:1463.5px;width:103.2px;top:860.1px;color:#5f9a00;">38.14</div>
<div class="td" style="left:1566.7px;width:69.8px;top:860.1px;color:#f00d0d;padding-right:6px;">11.50</div>
<div class="ic" style="top:905.3px"></div>
<div class="td" style="left:463.2px;width:112.5px;top:893.9px;color:#a0580f;padding-right:7px;">20251121</div>
<div class="td" style="left:575.7px;width:90.3px;top:893.9px;color:#a0580f;">146,000</div>
<div class="td" style="left:666.0px;width:79.0px;top:893.9px;color:#8b0a0a;">16,594</div>
<div class="td" style="left:745.0px;width:118.5px;top:893.9px;color:#5f9a00;">8.80</div>
<div class="td" style="left:863.5px;width:87.4px;top:893.9px;color:#5f9a00;">66,102</div>
<div class="td" style="left:950.9px;width:101.5px;top:893.9px;color:#5f9a00;">45.28</div>
<div class="td" style="left:1052.4px;width:77.8px;top:893.9px;color:#444444;">33</div>
<div class="td" style="left:1130.2px;width:76.8px;top:893.9px;color:#444444;">5</div>
<div class="td" style="left:1207.0px;width:75.5px;top:893.9px;color:#5f9a00;">5</div>
<div class="td" style="left:1282.5px;width:95.3px;top:893.9px;color:#f00d0d;">5</div>
<div class="td" style="left:1377.8px;width:85.7px;top:893.9px;color:#5f9a00;">18</div>
<div class="td" style="left:1463.5px;width:103.2px;top:893.9px;color:#5f9a00;">38.17</div>
<div class="td" style="left:1566.7px;width:69.8px;top:893.9px;color:#5f9a00;padding-right:6px;">10.90</div>
<div class="ic" style="top:939.1px"></div>
<div class="td" style="left:463.2px;width:112.5px;top:927.7px;color:#a0580f;padding-right:7px;">20251114</div>
<div class="td" style="left:575.7px;width:90.3px;top:927.7px;color:#a0580f;">146,000</div>
<div class="td" style="left:666.0px;width:79.0px;top:927.7px;color:#8b0a0a;">15,989</div>
<div class="td" style="left:745.0px;width:118.5px;top:927.7px;color:#5f9a00;">9.13</div>
<div class="td" style="left:863.5px;width:87.4px;top:927.7px;color:#5f9a00;">66,107</div>
<div class="td" style="left:950.9px;width:101.5px;top:927.7px;color:#5f9a00;">45.28</div>
<div class="td" style="left:1052.4px;width:77.8px;top:927.7px;color:#5f9a00;">33</div>
<div class="td" style="left:1130.2px;width:76.8px;top:927.7px;color:#5f9a00;">5</div>
<div class="td" style="left:1207.0px;width:75.5px;top:927.7px;color:#444444;">6</div>
<div class="td" style="left:1282.5px;width:95.3px;top:927.7px;color:#444444;">3</div>
<div class="td" style="left:1377.8px;width:85.7px;top:927.7px;color:#444444;">19</div>
<div class="td" style="left:1463.5px;width:103.2px;top:927.7px;color:#f00d0d;">38.84</div>
<div class="td" style="left:1566.7px;width:69.8px;top:927.7px;color:#5f9a00;padding-right:6px;">11.90</div>
</body></html>
